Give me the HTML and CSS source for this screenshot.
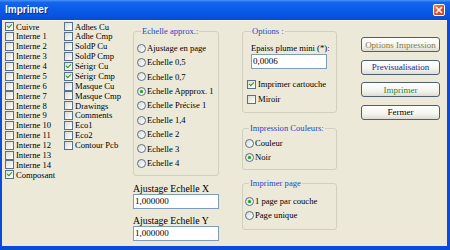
FILE: index.html
```html
<!DOCTYPE html>
<html lang="fr">
<head>
    <meta charset="UTF-8">
    <title>Imprimer</title>
    <link rel="stylesheet" href="styles.css">
</head>
<body>
    <div class="window">
        <div class="titlebar">
            <span class="title">Imprimer</span>
            <span class="close">
                <svg width="8" height="8" viewBox="0 0 8 8"><path d="M1 1L7 7M7 1L1 7" stroke="#fff" stroke-width="1.6"/></svg>
            </span>
        </div>
        <div class="client">
            <div class="checks">
                <div class="col col-left">
                    <div class="check on"><span class="box"></span>Cuivre</div>
                    <div class="check"><span class="box"></span>Interne 1</div>
                    <div class="check"><span class="box"></span>Interne 2</div>
                    <div class="check"><span class="box"></span>Interne 3</div>
                    <div class="check"><span class="box"></span>Interne 4</div>
                    <div class="check"><span class="box"></span>Interne 5</div>
                    <div class="check"><span class="box"></span>Interne 6</div>
                    <div class="check"><span class="box"></span>Interne 7</div>
                    <div class="check"><span class="box"></span>Interne 8</div>
                    <div class="check"><span class="box"></span>Interne 9</div>
                    <div class="check"><span class="box"></span>Interne 10</div>
                    <div class="check"><span class="box"></span>Interne 11</div>
                    <div class="check"><span class="box"></span>Interne 12</div>
                    <div class="check"><span class="box"></span>Interne 13</div>
                    <div class="check"><span class="box"></span>Interne 14</div>
                    <div class="check on"><span class="box"></span>Composant</div>
                </div>
                <div class="col">
                    <div class="check"><span class="box"></span>Adhes Cu</div>
                    <div class="check"><span class="box"></span>Adhe Cmp</div>
                    <div class="check"><span class="box"></span>SoldP Cu</div>
                    <div class="check"><span class="box"></span>SoldP Cmp</div>
                    <div class="check on"><span class="box"></span>Sérigr Cu</div>
                    <div class="check on"><span class="box"></span>Sérigr Cmp</div>
                    <div class="check"><span class="box"></span>Masque Cu</div>
                    <div class="check"><span class="box"></span>Masque Cmp</div>
                    <div class="check"><span class="box"></span>Drawings</div>
                    <div class="check"><span class="box"></span>Comments</div>
                    <div class="check"><span class="box"></span>Eco1</div>
                    <div class="check"><span class="box"></span>Eco2</div>
                    <div class="check"><span class="box"></span>Contour Pcb</div>
                </div>
            </div>

            <div class="scale">
                <fieldset class="group scale-group">
                    <legend>Echelle approx.:</legend>
                    <div class="radio"><span class="dot"></span>Ajustage en page</div>
                    <div class="radio"><span class="dot"></span>Echelle 0,5</div>
                    <div class="radio"><span class="dot"></span>Echelle 0,7</div>
                    <div class="radio on"><span class="dot"></span>Echelle Appprox. 1</div>
                    <div class="radio"><span class="dot"></span>Echelle Précise 1</div>
                    <div class="radio"><span class="dot"></span>Echelle 1,4</div>
                    <div class="radio"><span class="dot"></span>Echelle 2</div>
                    <div class="radio"><span class="dot"></span>Echelle 3</div>
                    <div class="radio"><span class="dot"></span>Echelle 4</div>
                </fieldset>
                <div class="field-label big-label label-x">Ajustage Echelle X</div>
                <div class="field">1,000000</div>
                <div class="field-label big-label label-y">Ajustage Echelle Y</div>
                <div class="field">1,000000</div>
            </div>

            <div class="opts">
                <fieldset class="group options-group">
                    <legend>Options :</legend>
                    <div class="field-label pen-label">Epaiss plume mini (*):</div>
                    <div class="field pen-field">0,0006</div>
                    <div class="check opt-check on"><span class="box"></span>Imprimer cartouche</div>
                    <div class="check opt-check"><span class="box"></span>Miroir</div>
                </fieldset>
                <fieldset class="group colour-group">
                    <legend>Impression Couleurs:</legend>
                    <div class="radio"><span class="dot"></span>Couleur</div>
                    <div class="radio on"><span class="dot"></span>Noir</div>
                </fieldset>
                <fieldset class="group page-group">
                    <legend>Imprimer page</legend>
                    <div class="radio on"><span class="dot"></span>1 page par couche</div>
                    <div class="radio"><span class="dot"></span>Page unique</div>
                </fieldset>
            </div>

            <div class="buttons">
                <button class="btn btn-options">Options Impression</button>
                <button class="btn btn-preview">Previsualisation</button>
                <button class="btn btn-print">Imprimer</button>
                <button class="btn">Fermer</button>
            </div>
        </div>
    </div>
</body>
</html>
```

FILE: styles.css
```css
* {
    margin: 0;
    padding: 0;
    box-sizing: border-box;
}
body {
    width: 450px;
    height: 250px;
    overflow: hidden;
    font-family: "Liberation Serif", "DejaVu Serif", serif;
    font-size: 8.6px;
    line-height: 1;
    color: #000;
}
.window {
    width: 450px;
    height: 250px;
    display: flex;
    flex-direction: column;
    background: #0a4bdc;
}
.titlebar {
    height: 20px;
    display: flex;
    align-items: center;
    justify-content: space-between;
    padding: 0 5px 0 5px;
    background: linear-gradient(#4a94f8 0, #1566ec 12%, #0a5ce8 45%, #0654e0 80%, #0a4acf 100%);
}
.title {
    font-family: "Liberation Sans", Arial, sans-serif;
    font-weight: bold;
    font-size: 10px;
    color: #fff;
    text-shadow: 1px 1px 0 #0a2a8c;
}
.close {
    width: 12px;
    height: 12px;
    margin-top: -1px;
    border: 1px solid #fff;
    border-radius: 2px;
    background: linear-gradient(135deg, #f08a62, #e04e24 55%, #c8401c);
    display: flex;
    align-items: center;
    justify-content: center;
}
.client {
    flex: 1;
    margin: 0 3px 4px 2px;
    background: #ece9d8;
    border-top: 1px solid #f6f4ec;
    display: flex;
    padding: 1px 0 0 3px;
    white-space: nowrap;
}

/* check boxes */
.checks {
    width: 128px;
    display: flex;
}
.col {
    width: 66px;
}
.col-left {
    width: 59px;
}
.check {
    height: 9.87px;
    display: flex;
    align-items: center;
}
.box {
    width: 9px;
    height: 9px;
    margin-right: 2px;
    border: 1px solid #5a7088;
    background: linear-gradient(135deg, #dcdcd2, #ffffff);
    display: flex;
    align-items: center;
    justify-content: center;
    flex-shrink: 0;
}
.check.on .box::after {
    content: "";
    width: 4px;
    height: 2px;
    margin-top: -2px;
    border-left: 1.5px solid #21a121;
    border-bottom: 1.5px solid #21a121;
    transform: rotate(-45deg);
}

/* radios */
.radio {
    height: 14.4px;
    display: flex;
    align-items: center;
}
.dot {
    width: 9px;
    height: 9px;
    margin-right: 1px;
    border-radius: 50%;
    border: 1px solid #5a7088;
    background: linear-gradient(135deg, #dcdcd2, #ffffff);
    display: flex;
    align-items: center;
    justify-content: center;
    flex-shrink: 0;
}
.radio.on .dot::after {
    content: "";
    width: 3px;
    height: 3px;
    border-radius: 50%;
    background: #21a121;
    box-shadow: 0 0 1px #5fd05f;
}

/* group boxes */
.group {
    border: 1px solid #d0d0bf;
    border-radius: 3px;
    min-width: 0;
}
.group legend {
    margin-left: 4px;
    padding: 0 1px;
    color: #1f48c8;
    line-height: 10px;
}

.scale {
    width: 86px;
    margin-right: 23px;
    padding-top: 4px;
}
.scale-group {
    height: 150px;
    padding: 5px 3px 0 3px;
}
.field-label {
    height: 11px;
    display: flex;
    align-items: center;
}
.big-label {
    font-size: 9.8px;
}
.label-x {
    margin-top: 7px;
}
.label-y {
    margin-top: 6px;
}
.field {
    height: 15px;
    border: 1px solid #7f9db9;
    background: #fff;
    padding-left: 1px;
    display: flex;
    align-items: center;
    font-size: 9px;
}

.opts {
    width: 95px;
    margin-right: 24px;
    padding-top: 4px;
}
.options-group {
    height: 87px;
    padding: 7px 4px 0 4px;
}
.pen-label,
.pen-field {
    margin-left: 4px;
    width: 76px;
}
.opt-check {
    height: 15px;
}
.pen-field + .opt-check {
    margin-top: 8px;
}
.colour-group {
    margin-top: 10px;
    height: 47px;
    padding: 3px 2px 0 2px;
}
.page-group {
    margin-top: 8px;
    height: 52px;
    padding: 6px 2px 0 2px;
}

/* buttons */
.buttons {
    width: 79px;
    padding-top: 15px;
    display: flex;
    flex-direction: column;
    gap: 7.6px;
}
.btn {
    height: 15px;
    border: 1px solid #4f5f72;
    border-radius: 3px;
    background: linear-gradient(#ffffff, #f4f4ef 60%, #dedcd2);
    font-family: "Liberation Serif", "DejaVu Serif", serif;
    font-size: 9px;
    white-space: nowrap;
    color: #000;
}
.btn-options {
    color: #857a3c;
}
.btn-preview {
    color: #1e2690;
}
.btn-print {
    color: #2a8a3e;
}
```
